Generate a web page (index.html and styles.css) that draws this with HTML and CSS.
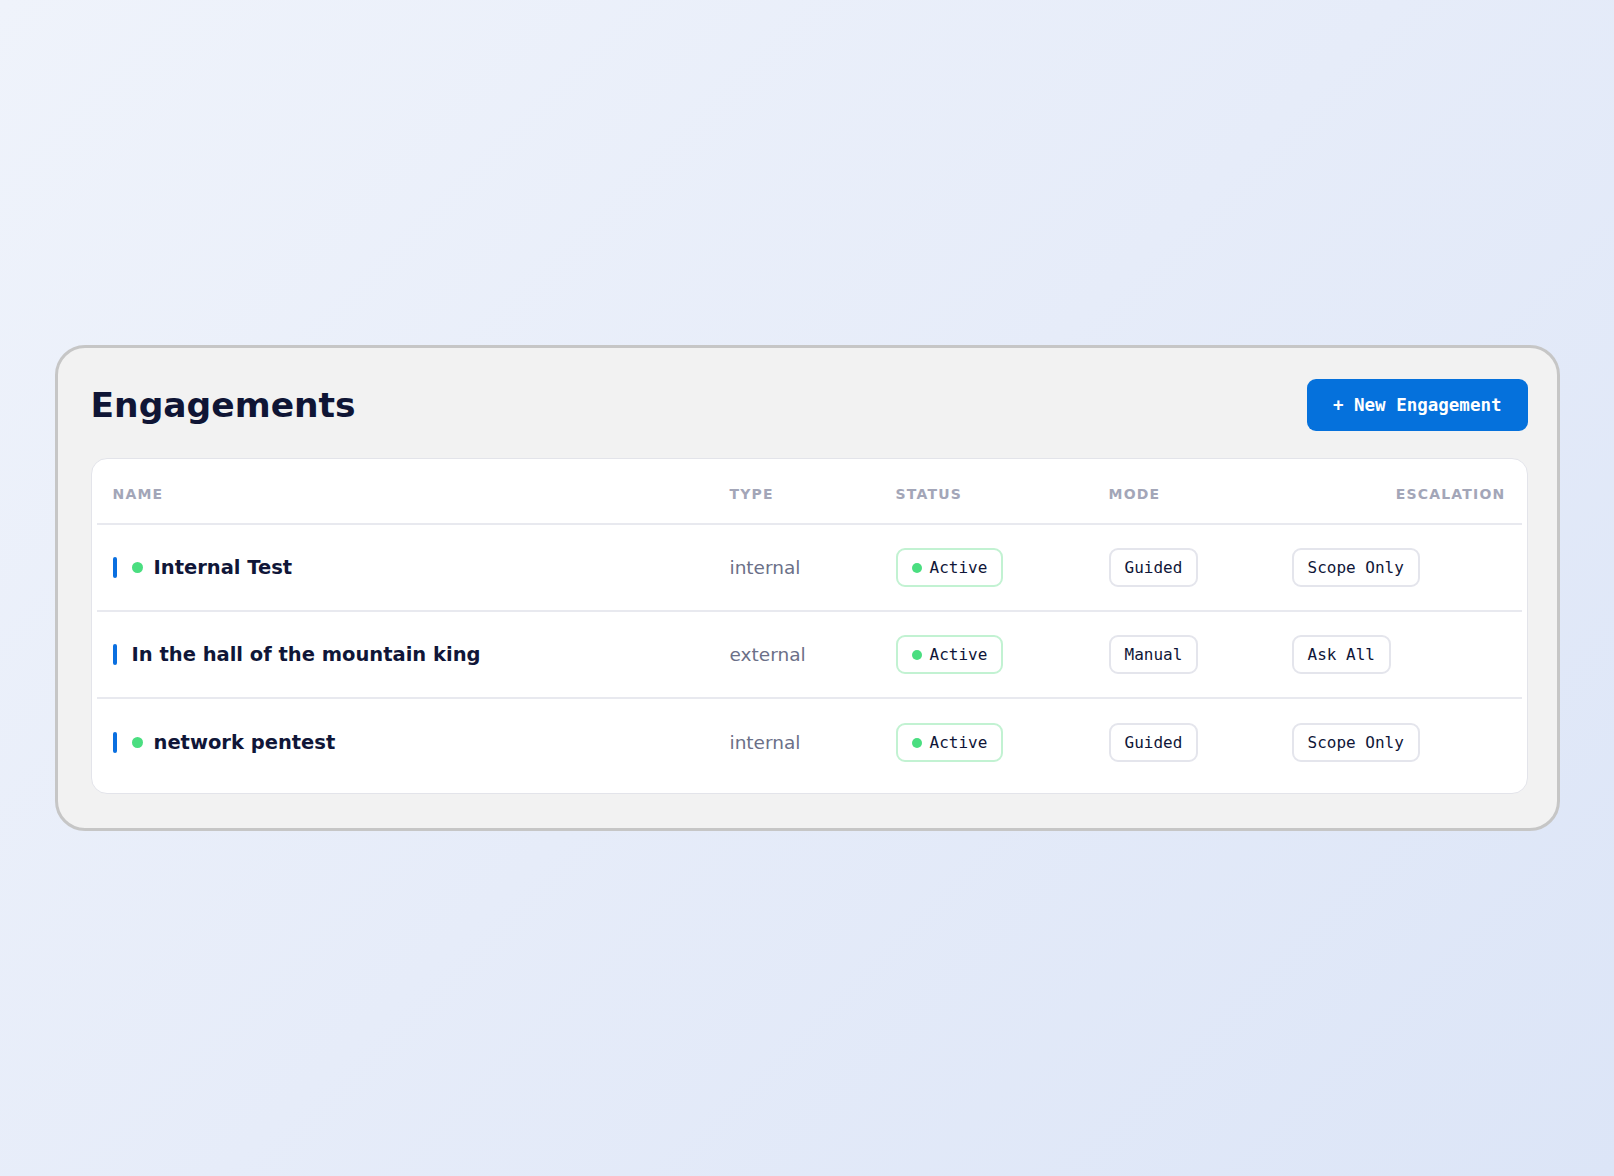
FILE: index.html
```html
<!DOCTYPE html>
<html lang="en">
<head>
    <meta charset="utf-8">
    <title>Engagements</title>
    <link rel="stylesheet" href="styles.css">
</head>
<body>
    <div class="panel">
        <div class="panel-header">
            <h1>Engagements</h1>
            <button class="btn-new">+ New Engagement</button>
        </div>

        <div class="card">
            <div class="row head">
                <div class="cell">Name</div>
                <div class="cell">Type</div>
                <div class="cell">Status</div>
                <div class="cell">Mode</div>
                <div class="cell right">Escalation</div>
            </div>

            <div class="row">
                <div class="cell name"><span class="bar"></span><span class="dot"></span>Internal Test</div>
                <div class="cell type">internal</div>
                <div class="cell"><span class="badge active"><span class="badge-dot"></span>Active</span></div>
                <div class="cell"><span class="badge">Guided</span></div>
                <div class="cell"><span class="badge">Scope Only</span></div>
            </div>

            <div class="row">
                <div class="cell name"><span class="bar"></span>In the hall of the mountain king</div>
                <div class="cell type">external</div>
                <div class="cell"><span class="badge active"><span class="badge-dot"></span>Active</span></div>
                <div class="cell"><span class="badge">Manual</span></div>
                <div class="cell"><span class="badge">Ask All</span></div>
            </div>

            <div class="row last">
                <div class="cell name"><span class="bar"></span><span class="dot"></span>network pentest</div>
                <div class="cell type">internal</div>
                <div class="cell"><span class="badge active"><span class="badge-dot"></span>Active</span></div>
                <div class="cell"><span class="badge">Guided</span></div>
                <div class="cell"><span class="badge">Scope Only</span></div>
            </div>
        </div>
    </div>
</body>
</html>
```

FILE: styles.css
```css
body {
    margin: 0;
    min-height: 100vh;
    display: flex;
    align-items: center;
    justify-content: center;
    background: linear-gradient(135deg, #eff3fb 0%, #e6ecf9 50%, #dce5f7 100%);
    font-family: "DejaVu Sans", sans-serif;
    color: #101638;
}

.panel {
    width: 1505px;
    box-sizing: border-box;
    background-color: #f2f2f2;
    border: 3px solid #c6c6c6;
    border-radius: 30px;
    padding: 31px 29px 34px 33px;
}

.panel-header {
    display: flex;
    align-items: center;
    justify-content: space-between;
    margin-bottom: 27px;
}

h1 {
    margin: 0;
    font-size: 34.5px;
    font-weight: bold;
    color: #0f1535;
}

.btn-new {
    height: 52px;
    padding: 0 26px;
    border: none;
    border-radius: 9px;
    background-color: #0571dc;
    color: white;
    font-family: "DejaVu Sans Mono", monospace;
    font-size: 17.5px;
    font-weight: bold;
    cursor: pointer;
}

.card {
    background-color: white;
    border: 1px solid #e3e4ea;
    border-radius: 16px;
    padding: 6px 5px 7px;
}

.row {
    display: grid;
    grid-template-columns: 617px 166px 213px 183px 1fr;
    align-items: center;
    height: 87px;
    box-sizing: border-box;
    border-bottom: 2px solid #e8e9ef;
}

.row.head {
    height: 60px;
}

.row.last {
    border-bottom: none;
}

.cell {
    padding: 0 16px;
}

.right {
    text-align: right;
}

.head .cell {
    font-size: 14px;
    font-weight: bold;
    letter-spacing: 1.2px;
    text-transform: uppercase;
    color: #a3a6b8;
}

.name {
    display: flex;
    align-items: center;
    font-size: 19.5px;
    font-weight: bold;
}

.bar {
    width: 4px;
    height: 21px;
    border-radius: 2px;
    background-color: #0a6fe0;
    margin-right: 15px;
}

.dot {
    width: 11px;
    height: 11px;
    border-radius: 50%;
    background-color: #4ade80;
    margin-right: 11px;
}

.type {
    font-size: 18.5px;
    color: #6b7088;
}

.badge {
    display: inline-flex;
    align-items: center;
    padding: 8px 14px;
    line-height: 19px;
    border: 2px solid #e4e5ec;
    border-radius: 9px;
    background-color: white;
    font-family: "DejaVu Sans Mono", monospace;
    font-size: 16px;
    color: #101638;
}

.badge.active {
    border-color: #c2f2d2;
}

.badge-dot {
    width: 10px;
    height: 10px;
    border-radius: 50%;
    background-color: #4ade80;
    margin-right: 8px;
}
```
